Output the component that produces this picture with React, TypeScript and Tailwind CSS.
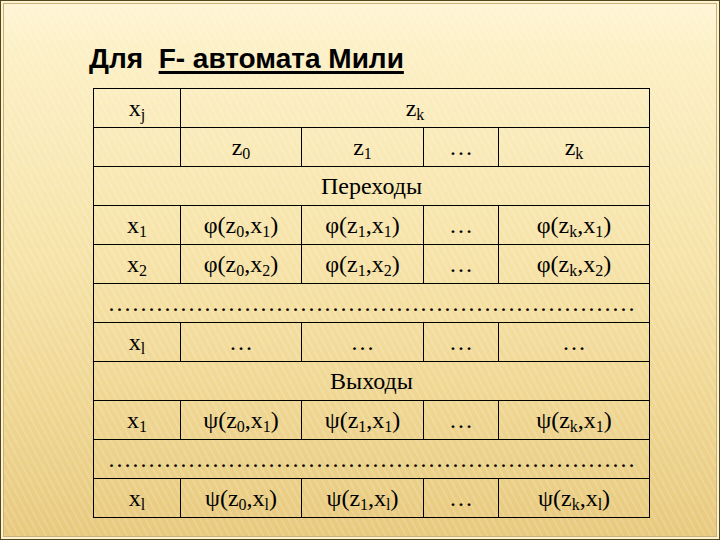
const cols = [87, 121, 122, 75, 151];

function X({ b, s }: { b: string; s: string }) {
  return (
    <span>
      {b}
      <sub className="text-[16px]">{s}</sub>
    </span>
  );
}

function Fn({ f, z, x }: { f: string; z: string; x: string }) {
  return (
    <span>
      {f}(z<sub className="text-[16px]">{z}</sub>,x<sub className="text-[16px]">{x}</sub>)
    </span>
  );
}

const cell = "border border-black text-center p-0";
const dots = "…".repeat(22);

export default function App() {
  return (
    <div className="w-[720px] h-[540px] border border-[#54461c] p-[2px] bg-[#fdf3d0]">
      <div className="h-full border border-[#c8b278] bg-[repeating-linear-gradient(62deg,rgba(255,255,255,0.14)_0px,rgba(255,255,255,0.14)_2px,transparent_2px,transparent_6px),linear-gradient(180deg,#fff5d4_0%,#fcf0c6_8%,#f6e2a6_50%,#e8ca7e_100%)]">
        <div className="pt-[39px] pl-[85px] h-[32px] box-content">
          <h1 className="font-['Liberation_Sans',Arial,sans-serif] font-bold text-[28px] leading-[32px] text-black whitespace-pre">
            {"Для  "}
            <span className="underline decoration-[3px] underline-offset-[3px]">F- автомата Мили</span>
          </h1>
        </div>
        <table className="ml-[89px] mt-[13px] table-fixed border-collapse font-['Liberation_Serif','Times_New_Roman',serif] text-[24px] text-black w-[556px]">
          <colgroup>
            {cols.map((w, i) => (
              <col key={i} style={{ width: w }} />
            ))}
          </colgroup>
          <tbody>
            <tr className="h-[39px]">
              <td className={cell}><X b="x" s="j" /></td>
              <td className={cell} colSpan={4}><X b="z" s="k" /></td>
            </tr>
            <tr className="h-[39px]">
              <td className={cell}></td>
              <td className={cell}><X b="z" s="0" /></td>
              <td className={cell}><X b="z" s="1" /></td>
              <td className={cell}>…</td>
              <td className={cell}><X b="z" s="k" /></td>
            </tr>
            <tr className="h-[39px]">
              <td className={cell} colSpan={5}>Переходы</td>
            </tr>
            <tr className="h-[39px]">
              <td className={cell}><X b="x" s="1" /></td>
              <td className={cell}><Fn f="φ" z="0" x="1" /></td>
              <td className={cell}><Fn f="φ" z="1" x="1" /></td>
              <td className={cell}>…</td>
              <td className={cell}><Fn f="φ" z="k" x="1" /></td>
            </tr>
            <tr className="h-[39px]">
              <td className={cell}><X b="x" s="2" /></td>
              <td className={cell}><Fn f="φ" z="0" x="2" /></td>
              <td className={cell}><Fn f="φ" z="1" x="2" /></td>
              <td className={cell}>…</td>
              <td className={cell}><Fn f="φ" z="k" x="2" /></td>
            </tr>
            <tr className="h-[39px]">
              <td className={`${cell} whitespace-nowrap`} colSpan={5}>{dots}</td>
            </tr>
            <tr className="h-[39px]">
              <td className={cell}><X b="x" s="l" /></td>
              <td className={cell}>…</td>
              <td className={cell}>…</td>
              <td className={cell}>…</td>
              <td className={cell}>…</td>
            </tr>
            <tr className="h-[39px]">
              <td className={cell} colSpan={5}>Выходы</td>
            </tr>
            <tr className="h-[39px]">
              <td className={cell}><X b="x" s="1" /></td>
              <td className={cell}><Fn f="ψ" z="0" x="1" /></td>
              <td className={cell}><Fn f="ψ" z="1" x="1" /></td>
              <td className={cell}>…</td>
              <td className={cell}><Fn f="ψ" z="k" x="1" /></td>
            </tr>
            <tr className="h-[39px]">
              <td className={`${cell} whitespace-nowrap`} colSpan={5}>{dots}</td>
            </tr>
            <tr className="h-[39px]">
              <td className={cell}><X b="x" s="l" /></td>
              <td className={cell}><Fn f="ψ" z="0" x="l" /></td>
              <td className={cell}><Fn f="ψ" z="1" x="l" /></td>
              <td className={cell}>…</td>
              <td className={cell}><Fn f="ψ" z="k" x="l" /></td>
            </tr>
          </tbody>
        </table>
      </div>
    </div>
  );
}
